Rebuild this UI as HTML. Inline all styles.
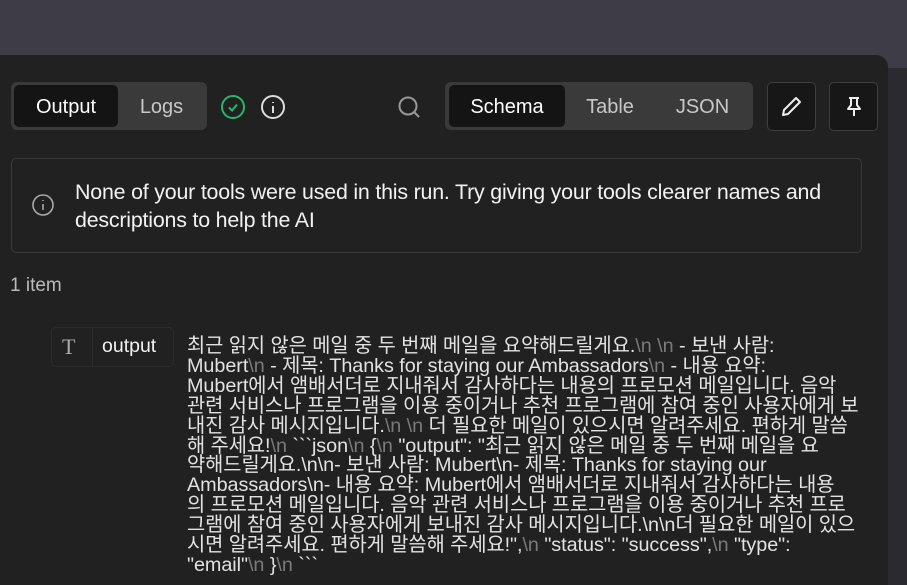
<!DOCTYPE html>
<html><head><meta charset="utf-8"><style>
body{margin:0;width:907px;height:585px;background:#3d3c47;overflow:hidden;font-family:"Liberation Sans","Noto Sans CJK KR",sans-serif;position:relative}
.right{position:absolute;left:885px;top:68px;width:22px;height:517px;background:#2b2a31}
.panel{position:absolute;left:0;top:55px;width:888px;height:530px;background:#212121;border-top-right-radius:12px}
.seg{position:absolute;background:#3a3a3a;border-radius:6px;height:48px;top:82px}
.btn{position:absolute;top:3px;height:42px;line-height:44px;color:#c8c8c8;font-size:20px;text-align:center}
.btn.on{background:#141414;color:#fff;border-radius:5px}
.sq{position:absolute;top:82px;width:47px;height:47px;border:1px solid #3e3e3e;border-radius:5px;background:#171717}
.box{position:absolute;left:11px;top:158px;width:849px;height:93px;border:1px solid #3a3a3a;border-radius:5px}
.box p{margin:0;position:absolute;left:63px;top:19px;color:#f2f2f2;font-size:21.4px;line-height:28px;letter-spacing:-0.2px}
.txt{position:absolute;left:187px;top:337px;color:#e2e2e2;font-size:19.8px;line-height:19.9px;letter-spacing:-0.05px;white-space:nowrap}
.g{color:#7a7a7a}
</style></head><body>
<div class="right"></div>
<div class="panel"></div>
<div class="seg" style="left:11px;width:196px">
 <div class="btn on" style="left:3px;width:104px">Output</div>
 <div class="btn" style="left:107px;width:87px">Logs</div>
</div>
<svg style="position:absolute;left:220px;top:94px" width="26" height="26" viewBox="0 0 26 26"><circle cx="13" cy="13" r="11" fill="none" stroke="#2bb46a" stroke-width="2"/><path d="M9 13.5l3 3 5-6" fill="none" stroke="#2bb46a" stroke-width="2"/></svg>
<svg style="position:absolute;left:260px;top:94px" width="26" height="26" viewBox="0 0 26 26"><circle cx="13" cy="13" r="11" fill="none" stroke="#ddd" stroke-width="2"/><path d="M13 12v7M13 8v1" stroke="#ddd" stroke-width="2"/></svg>
<svg style="position:absolute;left:396px;top:94px" width="26" height="26" viewBox="0 0 26 26"><circle cx="12" cy="12" r="8.5" fill="none" stroke="#999" stroke-width="2"/><path d="M18 18l5 5" stroke="#999" stroke-width="2"/></svg>
<div class="seg" style="left:445px;width:308px">
 <div class="btn on" style="left:4px;width:116px">Schema</div>
 <div class="btn" style="left:120px;width:90px">Table</div>
 <div class="btn" style="left:210px;width:95px">JSON</div>
</div>
<div class="sq" style="left:767px"><svg style="position:absolute;left:11px;top:11px" width="26" height="26" viewBox="0 0 26 26"><path d="M17 4l4 4L9 20l-5 1 1-5z" fill="none" stroke="#eee" stroke-width="2" stroke-linejoin="round"/></svg></div>
<div class="sq" style="left:829px"><svg style="position:absolute;left:11px;top:11px" width="26" height="26" viewBox="0 0 26 26"><path d="M8 4h10M10 4v7l-3 4h12l-3-4V4M13 15v7" fill="none" stroke="#eee" stroke-width="2" stroke-linejoin="round"/></svg></div>
<div class="box">
 <svg style="position:absolute;left:19px;top:34px" width="24" height="24" viewBox="0 0 24 24"><circle cx="12" cy="12" r="10" fill="none" stroke="#aaa" stroke-width="1.6"/><path d="M12 11v6M12 7v1" stroke="#aaa" stroke-width="1.6"/></svg>
 <p>None of your tools were used in this run. Try giving your tools clearer names and<br>descriptions to help the AI</p>
</div>
<div style="position:absolute;left:10px;top:275px;color:#bbb;font-size:19px">1 item</div>
<div style="position:absolute;left:51px;top:327px;width:121px;height:38px;border:1px solid #2c2c2c;border-radius:5px">
 <span style="position:absolute;left:10px;top:6px;color:#aaa;font-family:'Liberation Serif',serif;font-size:22px">T</span>
 <span style="position:absolute;left:40px;top:0;width:1px;height:38px;background:#2c2c2c"></span>
 <span style="position:absolute;left:50px;top:7px;color:#f2f2f2;font-size:19.5px">output</span>
</div>
<div class="txt">최근 읽지 않은 메일 중 두 번째 메일을 요약해드릴게요.<span class="g">\n \n</span> - 보낸 사람:<br>
Mubert<span class="g">\n</span> - 제목: Thanks for staying our Ambassadors<span class="g">\n</span> - 내용 요약:<br>
Mubert에서 앰배서더로 지내줘서 감사하다는 내용의 프로모션 메일입니다. 음악<br>
관련 서비스나 프로그램을 이용 중이거나 추천 프로그램에 참여 중인 사용자에게 보<br>
내진 감사 메시지입니다.<span class="g">\n \n</span> 더 필요한 메일이 있으시면 알려주세요. 편하게 말씀<br>
해 주세요!<span class="g">\n</span> &#96;&#96;&#96;json<span class="g">\n</span> {<span class="g">\n</span>  "output": "최근 읽지 않은 메일 중 두 번째 메일을 요<br>
약해드릴게요.\n\n- 보낸 사람: Mubert\n- 제목: Thanks for staying our<br>
Ambassadors\n- 내용 요약: Mubert에서 앰배서더로 지내줘서 감사하다는 내용<br>
의 프로모션 메일입니다. 음악 관련 서비스나 프로그램을 이용 중이거나 추천 프로<br>
그램에 참여 중인 사용자에게 보내진 감사 메시지입니다.\n\n더 필요한 메일이 있으<br>
시면 알려주세요. 편하게 말씀해 주세요!",<span class="g">\n</span>  "status": "success",<span class="g">\n</span>  "type":<br>
"email"<span class="g">\n</span> }<span class="g">\n</span> &#96;&#96;&#96;</div>
</body></html>
